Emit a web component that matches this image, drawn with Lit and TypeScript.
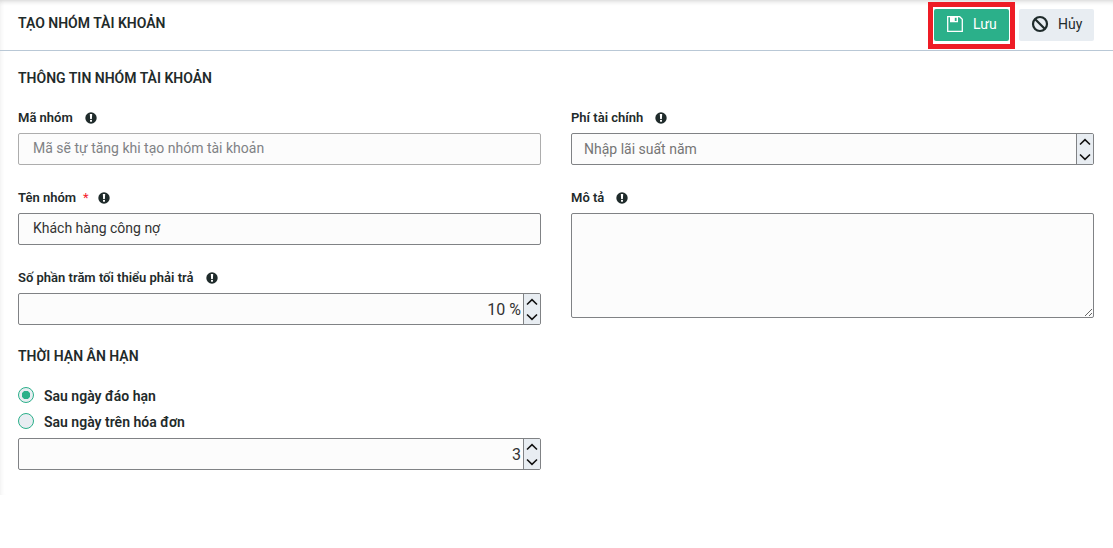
import { LitElement, html, css, svg } from "lit";
import { customElement, property, state } from "lit/decorators.js";

const infoIcon = html`<svg class="info" viewBox="0 0 12 12" width="12" height="12" aria-hidden="true">
  ${svg`<circle cx="6" cy="6" r="5.7" fill="#1f2b2b"/>
  <path d="M4.8 2.1h2.4L6.9 7H5.1z" fill="#fff"/>
  <rect x="5" y="7.9" width="2" height="1.8" fill="#fff"/>`}
</svg>`;

@customElement("number-box")
class NumberBox extends LitElement {
  static styles = css`
    :host { display: block; }
    .box {
      display: flex;
      box-sizing: border-box;
      height: 32px;
      border: 1px solid #808285;
      border-radius: 2px;
      background: #fcfcfc;
      overflow: hidden;
    }
    .input {
      flex: 1;
      min-width: 0;
      border: 0;
      padding: 0 2px 0 12px;
      background: transparent;
      font: 400 16px "Roboto", sans-serif;
      color: #333;
      text-align: right;
      outline: none;
    }
    .input::placeholder { color: #757575; opacity: 1; font-size: 14px; text-align: left; }
    .input:placeholder-shown { text-align: left; padding-bottom: 2px; }
    .spin {
      display: flex;
      flex-direction: column;
      width: 16px;
      border-left: 1px solid #808285;
      background: #e8edf2;
    }
    .step {
      flex: 1;
      display: flex;
      align-items: center;
      justify-content: center;
      padding: 0;
      border: 0;
      background: transparent;
    }
  `;
  @property() value = "";
  @property() placeholder = "";
  @property() name = "";
  @property() suffix = "";

  private step(by: number) {
    const next = Math.max(0, (parseFloat(this.value) || 0) + by);
    this.value = `${next}${this.suffix}`;
  }

  render() {
    return html`<div class="box">
      <input class="input" type="text" inputmode="decimal" aria-label=${this.name}
        .value=${this.value} placeholder=${this.placeholder || " "} />
      <span class="spin">
        <button class="step" type="button" aria-label="Tăng" @click=${() => this.step(1)}>
          <svg width="12" height="8" viewBox="0 0 12 8"><path d="M1 6.5 6 1.7l5 4.8" fill="none" stroke="#111" stroke-width="1.6"/></svg>
        </button>
        <button class="step" type="button" aria-label="Giảm" @click=${() => this.step(-1)}>
          <svg width="12" height="8" viewBox="0 0 12 8"><path d="M1 1.5 6 6.3l5-4.8" fill="none" stroke="#111" stroke-width="1.6"/></svg>
        </button>
      </span>
    </div>`;
  }
}

@customElement("app-root")
class AppRoot extends LitElement {
  static styles = css`
    :host {
      display: block;
      background: #fff;
      color: #1f2b2b;
      font: 400 14px/20px "Roboto", sans-serif;
    }
    .page {
      padding-bottom: 25px;
      box-shadow: inset 0 5px 5px -4px #cfcfcf, inset 4px 0 4px -3px #f0f0f0;
    }
    .bar {
      display: flex;
      align-items: center;
      justify-content: space-between;
      height: 50px;
      padding: 0 19px 0 18px;
      border-bottom: 1px solid #b9c8d6;
    }
    .title { margin: 0; padding-bottom: 4px; font-size: 14px; line-height: 20px; font-weight: 600; }
    .actions { display: flex; gap: 10px; }
    .btn {
      display: flex;
      align-items: center;
      gap: 9px;
      height: 32px;
      width: 75px;
      padding: 0 0 2px 12px;
      border: 0;
      border-radius: 2px;
      background: #e8edf2;
      color: #1f2b2b;
      font: 400 14px/20px "Roboto", sans-serif;
    }
    .save { background: #2bb08a; color: #fff; }
    .marked { position: relative; }
    .marked::after {
      content: "";
      position: absolute;
      inset: -7px -6px -8px;
      border: 5px solid #ee1c25;
      pointer-events: none;
    }
    .body { padding: 17px 19px 0 18px; }
    .heading { margin: 0; font-size: 14px; line-height: 20px; font-weight: 600; }
    .columns {
      display: grid;
      grid-template-columns: 1fr 1fr;
      gap: 30px;
      padding-top: 20px;
    }
    .column { display: flex; flex-direction: column; gap: 23px; }
    .caption {
      display: flex;
      align-items: center;
      height: 20px;
      margin-bottom: 5px;
      font-size: 13px;
      font-weight: 600;
    }
    .info { margin-left: 12px; }
    .star { margin-left: 7px; color: #f5222d; font-weight: 400; }
    .star + .info { margin-left: 9px; }
    .text {
      display: block;
      box-sizing: border-box;
      width: 100%;
      height: 32px;
      margin: 0;
      padding: 0 14px 2px;
      border: 1px solid #808285;
      border-radius: 2px;
      background: #fcfcfc;
      color: #333;
      font: 400 14px "Roboto", sans-serif;
      outline: none;
    }
    .text::placeholder { color: #808285; opacity: 1; }
    .text:disabled { border-color: #adadad; }
    .area { height: 105px; resize: vertical; }
    .terms { width: calc(50% - 15px); padding-top: 21px; }
    .radios { display: flex; flex-direction: column; gap: 6px; margin: 20px 0 6px; padding: 0; border: 0; }
    .choice { display: flex; align-items: center; gap: 10px; font-weight: 600; }
    .radio {
      appearance: none;
      box-sizing: border-box;
      width: 16px;
      height: 16px;
      margin: 0 0 2px;
      border: 1px solid #2bb08a;
      border-radius: 50%;
      background: #e8edf2;
    }
    .radio:checked { background: radial-gradient(circle, #2bb08a 4px, #e8edf2 4.5px); }
  `;

  @state() private basis = "due";

  private radio(value: string, text: string) {
    return html`<label class="choice">
      <input class="radio" type="radio" name="basis" value=${value}
        .checked=${this.basis === value} @change=${() => (this.basis = value)} />
      ${text}
    </label>`;
  }

  render() {
    return html`<form class="page" @submit=${(e: Event) => e.preventDefault()}>
      <header class="bar">
        <h1 class="title">TẠO NHÓM TÀI KHOẢN</h1>
        <div class="actions">
          <button class="btn save marked" type="submit">
            <svg width="18" height="18" viewBox="0 0 18 18" aria-hidden="true">
              <path d="M1.7 1.7h12l2.6 2.6v12H1.7z" fill="none" stroke="#fff" stroke-width="1.3"/>
              <path fill-rule="evenodd" d="M4 1.5h8v5.8H4zM8.8 2.7v3.2h1.8V2.7z" fill="#fff"/>
            </svg>
            <span>Lưu</span>
          </button>
          <button class="btn" type="button">
            <svg width="18" height="18" viewBox="0 0 18 18" aria-hidden="true">
              <circle cx="9" cy="9" r="7" fill="none" stroke="#1f2b2b" stroke-width="2.2"/>
              <path d="M4 4l10 10" stroke="#1f2b2b" stroke-width="2.2"/>
            </svg>
            <span>Hủy</span>
          </button>
        </div>
      </header>
      <main class="body">
        <h2 class="heading">THÔNG TIN NHÓM TÀI KHOẢN</h2>
        <div class="columns">
          <div class="column">
            <div>
              <label class="caption" for="code">Mã nhóm ${infoIcon}</label>
              <input class="text" id="code" disabled placeholder="Mã sẽ tự tăng khi tạo nhóm tài khoản" />
            </div>
            <div>
              <label class="caption" for="name">Tên nhóm <span class="star">*</span>${infoIcon}</label>
              <input class="text" id="name" .value=${"Khách hàng công nợ"} />
            </div>
            <div>
              <label class="caption">Số phần trăm tối thiểu phải trả ${infoIcon}</label>
              <number-box name="Số phần trăm tối thiểu phải trả" value="10 %" suffix=" %"></number-box>
            </div>
          </div>
          <div class="column">
            <div>
              <label class="caption">Phí tài chính ${infoIcon}</label>
              <number-box name="Phí tài chính" placeholder="Nhập lãi suất năm"></number-box>
            </div>
            <div>
              <label class="caption" for="note">Mô tả ${infoIcon}</label>
              <textarea class="text area" id="note"></textarea>
            </div>
          </div>
        </div>
        <section class="terms">
          <h2 class="heading">THỜI HẠN ÂN HẠN</h2>
          <fieldset class="radios" aria-label="Thời hạn ân hạn">
            ${this.radio("due", "Sau ngày đáo hạn")} ${this.radio("invoice", "Sau ngày trên hóa đơn")}
          </fieldset>
          <number-box name="Số ngày" value="3"></number-box>
        </section>
      </main>
    </form>`;
  }
}
